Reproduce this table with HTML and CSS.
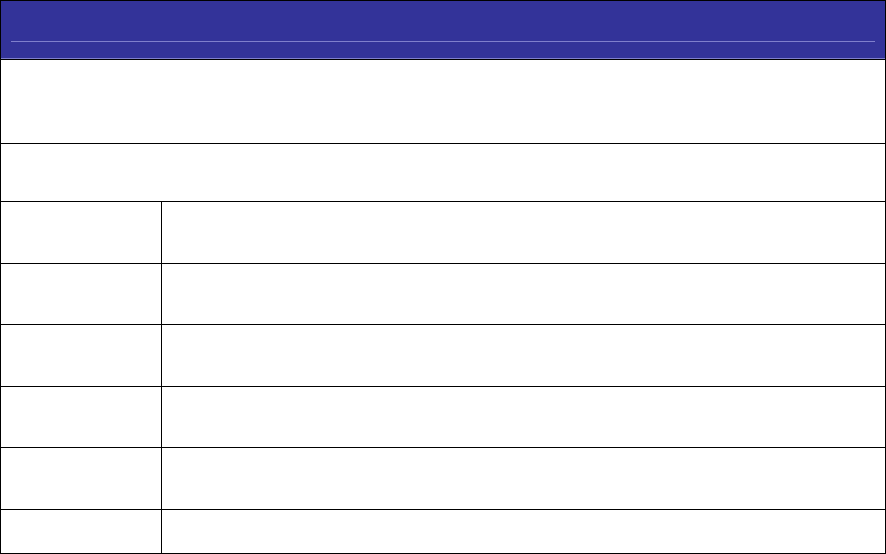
FILE: index.html
```html
<!DOCTYPE html>
<html>
<head>
<meta charset="utf-8">
<link rel="stylesheet" href="styles.css">
</head>
<body>
<div class="frame">
  <div class="header"><div class="header-rule"></div></div>
  <div class="header-edge"></div>
  <div class="row row-a"></div>
  <div class="row row-b"></div>
  <div class="row row-c split"><div class="cell-left"></div><div class="cell-right"></div></div>
  <div class="row row-d split"><div class="cell-left"></div><div class="cell-right"></div></div>
  <div class="row row-c split"><div class="cell-left"></div><div class="cell-right"></div></div>
  <div class="row row-d split"><div class="cell-left"></div><div class="cell-right"></div></div>
  <div class="row row-c split"><div class="cell-left"></div><div class="cell-right"></div></div>
  <div class="row row-h split last"><div class="cell-left"></div><div class="cell-right"></div></div>
</div>
</body>
</html>
```

FILE: styles.css
```css
html, body {
  margin: 0;
  padding: 0;
  background: #ffffff;
  font-family: "Liberation Sans", Arial, sans-serif;
}
.frame {
  width: 886px;
  height: 554px;
  box-sizing: border-box;
  border: 1px solid #000000;
  display: flex;
  flex-direction: column;
  background: #ffffff;
}
.header {
  height: 57px;
  background: #333399;
  border-bottom: 1px solid #7f7fcc;
  padding-top: 40px;
  box-sizing: content-box;
  height: 17px;
}
.header-rule {
  height: 1px;
  margin: 0 10px;
  background: #7f7fcc;
}
.header-edge {
  height: 1px;
  background: #000000;
}
.row {
  border-bottom: 1px solid #000000;
  flex: none;
}
.row.last {
  border-bottom: none;
}
.row-a { height: 83px; }
.row-b { height: 57px; }
.row-c { height: 61px; }
.row-d { height: 60px; }
.row-h { height: 43px; }
.split {
  display: flex;
}
.cell-left {
  width: 160px;
  border-right: 1px solid #000000;
  flex: none;
}
.cell-right {
  flex: 1;
}
```
